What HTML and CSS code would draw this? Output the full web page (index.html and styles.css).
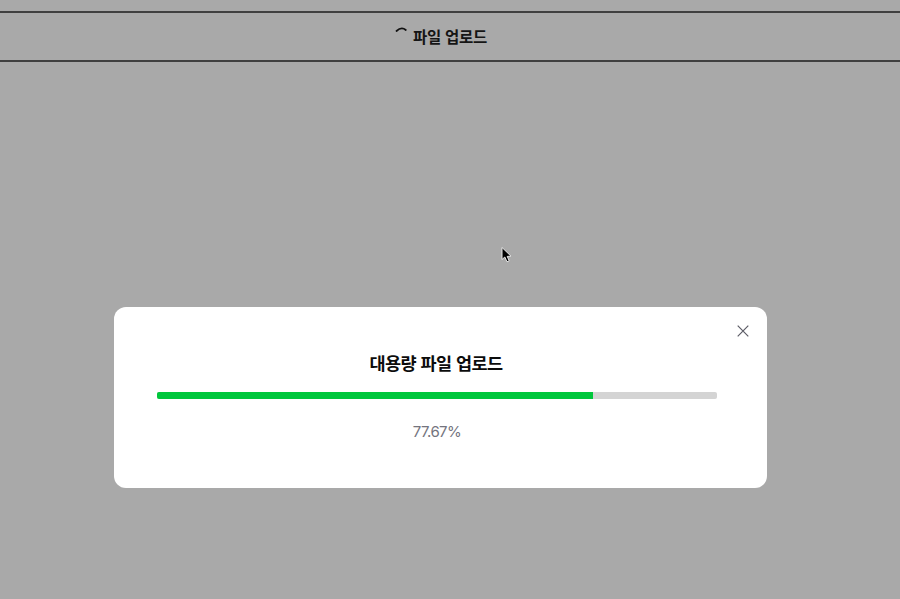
FILE: index.html
```html
<!doctype html>
<html lang="ko">

<head>
	<meta charset="UTF-8">
	<title>파일 업로드</title>
	<link rel="stylesheet" href="styles.css">
</head>

<body>

	<!-- 상단 -->
	<header class="topbar">
		<div class="loading">
			<svg class="spinner" width="16" height="16" viewBox="0 0 16 16">
				<path d="M2.5 6 Q7.5 1.4 11.8 5" fill="none" stroke="#111" stroke-width="1.8" stroke-linecap="round" />
			</svg>
			<span>파일 업로드</span>
		</div>
	</header>

	<!-- 마우스 커서 -->
	<svg class="cursor" width="14" height="18" viewBox="0 0 14 18">
		<path d="M2 1.5 L2 13.5 L4.8 11 L7 15.8 L9.2 14.8 L7.2 10.4 L11 10.2 Z" fill="#000" stroke="#e8e8e8" stroke-width="1" />
	</svg>

	<!-- 업로드 모달 -->
	<div class="modal">
		<button class="close" type="button">
			<svg width="12" height="12" viewBox="0 0 12 12">
				<path d="M0.7 0.7 L11.3 11.3 M11.3 0.7 L0.7 11.3" stroke="#5c5c66" stroke-width="1.2" fill="none" />
			</svg>
		</button>
		<h2 class="modal-title">대용량 파일 업로드</h2>
		<div class="progress">
			<div class="progress-bar" style="width: 77.8%"></div>
		</div>
		<p class="percent">77.67%</p>
	</div>

</body>

</html>
```

FILE: styles.css
```css
body {
	margin: 0;
	padding: 0;
	height: 599px;
	overflow: hidden;
	background: #a9a9a9;
	font-family: "Noto Sans CJK KR", "Noto Sans", sans-serif;
	color: #111;
	display: flex;
	flex-direction: column;
	align-items: flex-start;
}

.topbar {
	width: 100%;
	height: 47px;
	margin-top: 11px;
	border-top: 2px solid #404040;
	border-bottom: 2px solid #404040;
	display: flex;
	justify-content: center;
	align-items: center;
}

.loading {
	display: flex;
	align-items: center;
	gap: 3px;
	margin-left: -19px;
	margin-top: -2px;
	font-size: 15.5px;
	font-weight: 700;
	letter-spacing: -0.25px;
	color: #151515;
}

.spinner {
	margin-top: -6px;
}

.cursor {
	position: absolute;
	left: 500px;
	top: 246px;
}

.modal {
	position: relative;
	width: 653px;
	height: 181px;
	margin-top: 245px;
	margin-left: 114px;
	box-sizing: border-box;
	padding: 0 50px 0 43px;
	background: #fff;
	border-radius: 12px;
	text-align: center;
}

.close {
	position: absolute;
	top: 18px;
	right: 18px;
	width: 12px;
	height: 12px;
	padding: 0;
	border: 0;
	background: none;
	display: flex;
}

.modal-title {
	margin: 42px 2px 0 0;
	font-size: 17.5px;
	line-height: 28px;
	font-weight: 700;
	letter-spacing: -0.55px;
	color: #0c0c0c;
}

.progress {
	height: 7px;
	margin-top: 15px;
	border-radius: 2px;
	background: #d4d4d4;
	overflow: hidden;
}

.progress-bar {
	height: 100%;
	background: #00c73c;
}

.percent {
	margin: 22px 0 0 0;
	font-family: Inter, "Noto Sans", sans-serif;
	font-size: 15px;
	line-height: 22px;
	letter-spacing: -0.6px;
	color: #74747e;
}
```
